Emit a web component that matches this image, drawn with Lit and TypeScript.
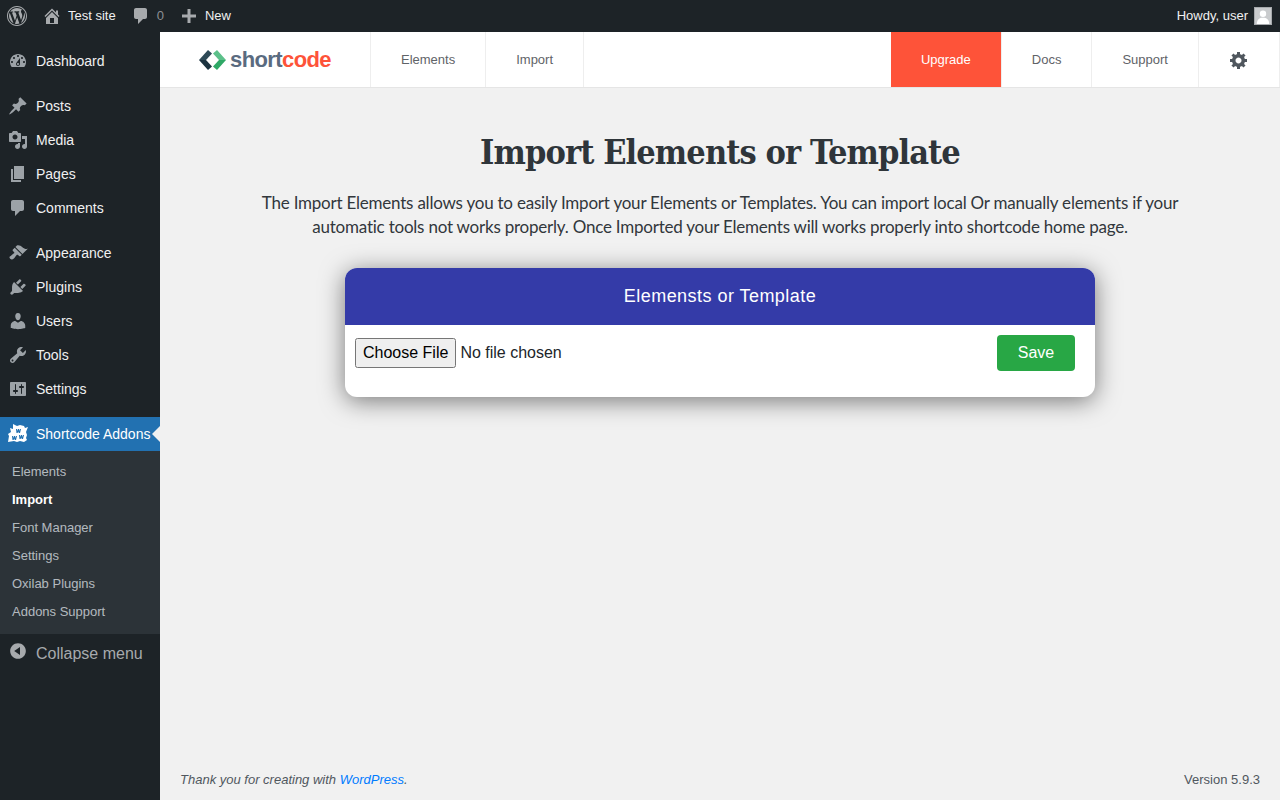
import { LitElement, html, css, svg } from "lit";
import { customElement } from "lit/decorators.js";

const P: Record<string, string> = {
  dash: "M3.76 16h12.48c1.1-1.37 1.76-3.11 1.76-5 0-4.42-3.58-8-8-8s-8 3.58-8 8c0 1.89.66 3.63 1.76 5zM10 4c.55 0 1 .45 1 1s-.45 1-1 1-1-.45-1-1 .45-1 1-1zM6 6c.55 0 1 .45 1 1s-.45 1-1 1-1-.45-1-1 .45-1 1-1zm8 0c.55 0 1 .45 1 1s-.45 1-1 1-1-.45-1-1 .45-1 1-1zm-5.37 5.55L12 7v6c0 1.1-.9 2-2 2s-2-.9-2-2c0-.57.24-1.08.63-1.45zM4 10c.55 0 1 .45 1 1s-.45 1-1 1-1-.45-1-1 .45-1 1-1zm12 0c.55 0 1 .45 1 1s-.45 1-1 1-1-.45-1-1 .45-1 1-1zm-5 3c0-.55-.45-1-1-1s-1 .45-1 1 .45 1 1 1 1-.45 1-1z",
  post: "M10.44 3.02l1.82-1.82 6.36 6.35-1.83 1.82c-1.05-.68-2.48-.57-3.41.36l-.75.75c-.92.93-1.04 2.35-.35 3.41l-1.83 1.82-2.41-2.41-2.8 2.79c-.42.42-3.38 2.71-3.8 2.29s1.86-3.39 2.28-3.81l2.79-2.79L4.1 9.36l1.83-1.82c1.05.69 2.48.57 3.4-.36l.75-.75c.93-.92 1.05-2.35.36-3.41z",
  media: "M13 11V4c0-.55-.45-1-1-1h-1.67L9 1H5L3.67 3H2c-.55 0-1 .45-1 1v7c0 .55.45 1 1 1h10c.55 0 1-.45 1-1zM7 4.5c1.38 0 2.5 1.12 2.5 2.5S8.38 9.5 7 9.5 4.5 8.38 4.5 7 5.62 4.5 7 4.5zM14 6h5v10.5c0 1.38-1.12 2.5-2.5 2.5S14 17.88 14 16.5s1.12-2.5 2.5-2.5c.17 0 .34.02.5.05V9h-3V6zm-4 8.05V13h2v3.5c0 1.38-1.12 2.5-2.5 2.5S7 17.88 7 16.5 8.12 14 9.5 14c.17 0 .34.02.5.05z",
  page: "M6 15V2h10v13H6zm-1 1h8v2H3V5h2v11z",
  comment: "M5 2h9c1.1 0 2 .9 2 2v7c0 1.1-.9 2-2 2h-2l-5 5v-5H5c-1.1 0-2-.9-2-2V4c0-1.1.9-2 2-2z",
  appearance: "M14.48 11.06L7.41 3.99l1.5-1.5c.5-.56 2.3-.47 3.51.32 1.21.8 1.43 1.28 2.91 2.1 1.18.64 2.45 1.26 4.45.85zm-.71.71L6.7 4.7 4.93 6.47c-.39.39-.39 1.02 0 1.41l1.06 1.06c.39.39.39 1.03 0 1.42-.6.6-1.43 1.11-2.21 1.69-.35.26-.7.53-1.01.84C1.43 13.23.91 14.48 2.21 15.78s2.55.78 3.91-.57c.31-.31.58-.66.84-1.01.58-.78 1.09-1.61 1.69-2.21.39-.39 1.02-.39 1.41 0l1.06 1.06c.39.39 1.02.39 1.41 0z",
  plugin: "M13.11 4.36L9.87 7.6 8 5.73l3.24-3.24c.35-.34 1.05-.2 1.56.32.52.51.66 1.21.31 1.55zm-8 1.77l.91-1.12 9.01 9.01-1.19.84c-.71.71-2.63 1.16-3.82 1.16H6.14L4.9 17.26c-.59.59-1.54.59-2.12 0-.59-.58-.59-1.53 0-2.12l1.24-1.24v-3.88c0-1.13.4-3.19 1.09-3.89zm7.26 3.97l3.24-3.24c.34-.35 1.04-.21 1.55.31.52.51.66 1.21.31 1.55l-3.24 3.25z",
  users: "M10 9.25c-2.27 0-2.73-3.44-2.73-3.44C7 4.02 7.82 2 9.97 2c2.16 0 2.98 2.02 2.71 3.81 0 0-.41 3.44-2.68 3.44zm0 2.57L12.72 10c2.39 0 4.52 2.33 4.52 4.53v2.49s-3.65 1.13-7.24 1.13c-3.65 0-7.24-1.13-7.24-1.13v-2.49c0-2.25 1.94-4.48 4.47-4.48z",
  tools: "M16.68 9.77c-1.34 1.34-3.3 1.67-4.95.99l-5.41 6.52c-.99.99-2.59.99-3.58 0s-.99-2.59 0-3.57l6.52-5.42c-.68-1.65-.35-3.61.99-4.95 1.28-1.28 3.12-1.62 4.72-1.06l-2.89 2.89 2.82 2.82 2.86-2.87c.53 1.58.18 3.39-1.08 4.65zM3.81 16.21c.4.39 1.04.39 1.43 0 .4-.4.4-1.04 0-1.43-.39-.4-1.03-.4-1.43 0-.39.39-.39 1.03 0 1.43z",
  settings: "M18 16V4c0-.55-.45-1-1-1H3c-.55 0-1 .45-1 1v12c0 .55.45 1 1 1h14c.55 0 1-.45 1-1zM8 11h1c.55 0 1 .45 1 1s-.45 1-1 1H8v1.5c0 .28-.22.5-.5.5s-.5-.22-.5-.5V13H6c-.55 0-1-.45-1-1s.45-1 1-1h1V5.5c0-.28.22-.5.5-.5s.5.22.5.5V11zm5-2h-1c-.55 0-1-.45-1-1s.45-1 1-1h1V5.5c0-.28.22-.5.5-.5s.5.22.5.5V7h1c.55 0 1 .45 1 1s-.45 1-1 1h-1v5.5c0 .28-.22.5-.5.5s-.5-.22-.5-.5V9z",
  collapse: "M10 2.16c4.33 0 7.84 3.51 7.84 7.84s-3.51 7.84-7.84 7.84S2.16 14.33 2.16 10 5.71 2.16 10 2.16zm2 11.72V6.12L6.18 9.97z",
  home: "M16 8.5l1.53 1.53-1.06 1.06L10 4.62l-6.47 6.47-1.06-1.06L10 2.5l4 4v-2h2v4zm-6-2.46l6 5.99V18H4v-5.97zM12 17v-5H8v5h4z",
  plus: "M8.500 3h3v5.500H17v3h-5.500V17h-3v-5.500H3v-3h5.500z",
  wp: "M20 10c0-5.52-4.48-10-10-10S0 4.48 0 10s4.48 10 10 10 10-4.48 10-10zM10 1.01c4.96 0 8.99 4.03 8.99 8.99s-4.03 8.99-8.99 8.99S1.01 14.96 1.01 10 5.04 1.01 10 1.01zM8.01 14.82L4.96 6.61c.49-.03 1.05-.08 1.05-.08.43-.05.38-1.01-.06-.99 0 0-1.29.1-2.13.1-.15 0-.33 0-.52-.01 1.44-2.17 3.9-3.6 6.7-3.6 2.09 0 3.99.79 5.41 2.09-.6-.08-1.45.35-1.45 1.42 0 .66.38 1.22.79 1.88.31.54.5 1.22.5 2.21 0 1.34-1.27 4.48-1.27 4.48l-2.71-7.5c.48-.03.75-.16.75-.16.43-.05.38-1.1-.05-1.08 0 0-1.3.11-2.14.11-.78 0-2.11-.11-2.11-.11-.43-.02-.48 1.06-.05 1.08l.84.08 1.12 3.04zm6.02 2.15L16.64 10s.67-1.69.39-3.81c.63 1.14.94 2.42.94 3.81 0 2.96-1.56 5.58-3.94 6.97zM2.68 6.77L6.5 17.25c-2.67-1.3-4.47-4.08-4.47-7.25 0-1.16.2-2.23.65-3.23zm7.45 4.53l2.29 6.25c-.75.27-1.57.42-2.42.42-.72 0-1.41-.11-2.06-.3z",
  gear: "M18 12h-2.18c-.17.7-.44 1.35-.81 1.93l1.54 1.54-2.1 2.1-1.54-1.54c-.58.36-1.23.63-1.91.79V19H8v-2.18c-.68-.16-1.33-.43-1.91-.79l-1.54 1.54-2.12-2.12 1.54-1.54c-.36-.58-.63-1.23-.79-1.91H1V9.03h2.17c.16-.7.44-1.35.8-1.94L2.43 5.55l2.1-2.1 1.54 1.54c.58-.37 1.24-.64 1.93-.81V2h3v2.18c.68.16 1.33.43 1.91.79l1.54-1.54 2.12 2.12-1.54 1.54c.36.59.64 1.24.8 1.94H18V12zm-8.5 1.5c1.66 0 3-1.34 3-3s-1.34-3-3-3-3 1.34-3 3 1.34 3 3 3z",
};

const icon = (name: string, size = 20) => html`<svg class="ic" width=${size} height=${size} viewBox="0 0 20 20" aria-hidden="true">${svg`<path fill="currentColor" fill-rule="evenodd" d=${P[name]}></path>`}</svg>`;

const groups = [
  [["dash", "Dashboard"]],
  [["post", "Posts"], ["media", "Media"], ["page", "Pages"], ["comment", "Comments"]],
  [["appearance", "Appearance"], ["plugin", "Plugins"], ["users", "Users"], ["tools", "Tools"], ["settings", "Settings"]],
];
const subs = ["Elements", "Import", "Font Manager", "Settings", "Oxilab Plugins", "Addons Support"];

@customElement("app-root")
export class AppRoot extends LitElement {
  static styles = css`
    :host { display: grid; grid-template-columns: 160px 1fr; grid-template-rows: 32px 768px; width: 1280px; height: 800px; overflow: hidden; background: #f1f1f1; font-family: "Liberation Sans", Arial, sans-serif; }
    * { box-sizing: border-box; }
    .ic { display: block; flex: none; }
    .bar { grid-column: 1 / 3; background: #1d2327; color: #f0f0f1; display: flex; align-items: center; font-size: 13px; padding: 0 8px 0 7px; }
    .bar .ic { color: #a7aaad; }
    .bar-l { display: flex; align-items: center; flex: 1; }
    .bi { display: flex; align-items: center; }
    .bi span { padding-bottom: 2px; }
    .b-home { margin-left: 15px; gap: 6px; }
    .b-com { margin-left: 15px; gap: 6px; }
    .b-com span { color: #8c8f94; }
    .b-new { margin-left: 15px; gap: 6px; }
    .avatar { width: 18px; height: 18px; margin-left: 6px; background: #c9cbcd; border: 1px solid #a7aaad; display: block; }
    .side { background: #1d2327; padding-top: 12px; display: flex; flex-direction: column; }
    .grp { margin-bottom: 11px; }
    .mi { height: 34px; display: flex; align-items: center; color: #f0f0f1; font-size: 14px; padding-left: 8px; gap: 8px; }
    .mi .ic { color: #9ca2a7; }
    .mi.active { background: #2271b1; color: #fff; position: relative; white-space: nowrap; }
    .mi.active::after { content: ""; position: absolute; right: 0; top: 50%; margin-top: -8px; border: 8px solid transparent; border-right-color: #f0f0f1; border-left-width: 0; }
    .sub { background: #2c3338; padding: 7px 0 8px; height: 183px; }
    .sub div { height: 28px; line-height: 28px; padding-left: 12px; font-size: 13px; color: rgba(240,246,252,.7); }
    .sub div.on { color: #fff; font-weight: 700; }
    .collapse { display: flex; align-items: flex-start; height: 36px; padding: 7px 0 0 8px; gap: 8px; color: #a7aaad; font-size: 16px; line-height: 26px; }
    .collapse span { display: block; }
    .main { display: flex; flex-direction: column; min-width: 0; }
    .nav { height: 56px; background: #fff; border-bottom: 1px solid #e5e5e5; display: flex; flex: none; font-size: 13px; color: #5f6368; }
    .brand { width: 210px; display: flex; align-items: center; padding-left: 39px; gap: 3px; }
    .brand b { font-size: 22px; letter-spacing: -.6px; color: #5a6b80; font-weight: 700; }
    .brand b i { font-style: normal; color: #fe5339; }
    .ni { display: flex; align-items: center; justify-content: center; padding: 0 30px; border-left: 1px solid #eee; }
    .ni.end { border-right: 1px solid #eee; }
    .spacer { flex: 1; border-left: 1px solid #eee; }
    .ni.up { background: #fe5339; color: #fff; border-left: 0; width: 110px; padding: 0; }
    .ni.gear { width: 82px; padding: 0; color: #50575e; }
    .content { flex: 1; display: flex; flex-direction: column; align-items: center; }
    h1 { margin: 39px 0 0; font: 700 34px/50px "DejaVu Serif Condensed", "DejaVu Serif", serif; color: #2f353a; letter-spacing: -.9px; white-space: nowrap; }
    .lead { margin: 14px 0 0; width: 930px; text-align: center; font: 400 17px/24px Lato, sans-serif; letter-spacing: -.22px; color: #32373c; }
    .card { margin-top: 29px; width: 750px; height: 129px; background: #fff; border-radius: 12px; box-shadow: 0 4px 24px rgba(0,0,0,.5); overflow: hidden; }
    .card-h { height: 57px; background: #343ba8; color: #fff; font-size: 18px; letter-spacing: .46px; display: flex; align-items: center; justify-content: center; }
    .card-b { display: flex; justify-content: space-between; padding: 10px 20px 0 10px; align-items: flex-start; }
    input[type=file] { font: 16px "Liberation Sans", sans-serif; color: #212529; margin-top: 3px; width: 300px; height: 30px; }
    input[type=file]::file-selector-button { height: 30px; }
    .save { width: 78px; height: 36px; background: #28a745; color: #fff; border: 0; border-radius: 4px; font: 16px "Liberation Sans", sans-serif; padding: 0; }
    .foot { display: flex; justify-content: space-between; padding: 0 20px; height: 30px; flex: none; font-size: 13px; color: #50575e; align-items: flex-start; line-height: 20px; }
    .foot em a { color: #007bff; text-decoration: none; }
  `;

  render() {
    return html`
      <header class="bar">
        <div class="bar-l">
          ${icon("wp", 20)}
          <div class="bi b-home">${icon("home", 20)}<span>Test site</span></div>
          <div class="bi b-com">${icon("comment", 20)}<span>0</span></div>
          <div class="bi b-new">${icon("plus", 20)}<span>New</span></div>
        </div>
        <div class="bi"><span>Howdy, user</span>
          <svg class="avatar" viewBox="0 0 18 18" aria-hidden="true"><circle cx="9" cy="6.500" r="3.600" fill="#fff"></circle><path d="M2 18c0-5 3-7 7-7s7 2 7 7z" fill="#fff"></path></svg>
        </div>
      </header>
      <aside class="side">
        ${groups.map((g) => html`<div class="grp">${g.map(([i, t]) => html`<div class="mi">${icon(i)}${t}</div>`)}</div>`)}
        <div class="mi active">
          <svg class="ic" width="20" height="20" viewBox="0 0 20 20" aria-hidden="true">
            <path fill="#fff" d="M5 0l4 2 3-1 4 1 1 2 3-1-2 5 1 3-1 3 1 2-3 2-4-1-3 1-3-1-6 1 1-6-1-2 3-2-1-4 3 1z"></path>
            <path fill="#2271b1" d="M8 5h1v2l1-2h1v2l1-2h1l-1 4h-1.200l-.6-1.500L9.600 9H8.500zM4 12h1v2l1-2h1v2l1-2h1l-1 4H6.800l-.6-1.500L5.600 16H4.500zM11 11h1v2l1-2h1v2l1-2h1l-1 4h-1.200l-.6-1.500-.6 1.500h-1.100z"></path>
          </svg>
          Shortcode Addons
        </div>
        <div class="sub">${subs.map((s) => html`<div class=${s === "Import" ? "on" : ""}>${s}</div>`)}</div>
        <div class="collapse">${icon("collapse")}<span>Collapse menu</span></div>
      </aside>
      <div class="main">
        <nav class="nav">
          <div class="brand">
            <svg width="28" height="22" viewBox="0 0 28 22" aria-hidden="true">
              <path fill="#2e4a57" d="M9 1l4 3.500L7 11H0z"></path><path fill="#1c3340" d="M0 11h7l6 6.500L9 21z"></path>
              <path fill="#5cc08a" d="M18 1l-4 3.500 6 6.500h7z"></path><path fill="#2fa866" d="M27 11h-7l-6 6.500 4 3.500z"></path>
            </svg>
            <b>short<i>code</i></b>
          </div>
          <div class="ni">Elements</div>
          <div class="ni">Import</div>
          <div class="spacer"></div>
          <div class="ni up">Upgrade</div>
          <div class="ni">Docs</div>
          <div class="ni">Support</div>
          <div class="ni gear end">${icon("gear", 20)}</div>
        </nav>
        <section class="content">
          <h1>Import Elements or Template</h1>
          <p class="lead">The Import Elements allows you to easily Import your Elements or Templates. You can import local Or manually elements if your automatic tools not works properly. Once Imported your Elements will works properly into shortcode home page.</p>
          <div class="card">
            <div class="card-h">Elemensts or Template</div>
            <div class="card-b">
              <input type="file" />
              <button class="save">Save</button>
            </div>
          </div>
        </section>
        <footer class="foot">
          <em>Thank you for creating with <a>WordPress</a>.</em>
          <span>Version 5.9.3</span>
        </footer>
      </div>
    `;
  }
}
